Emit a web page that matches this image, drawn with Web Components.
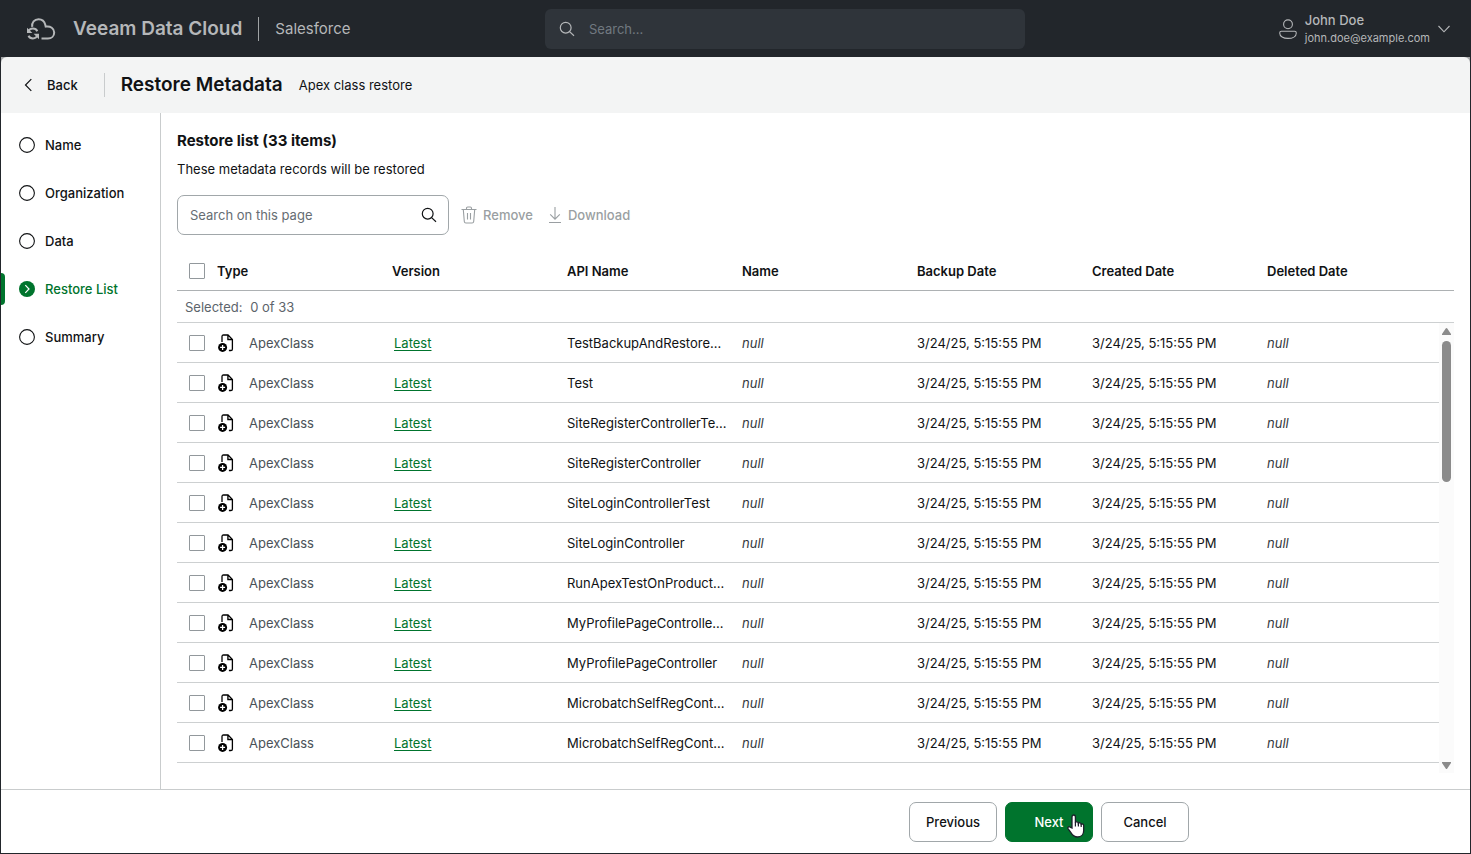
<!DOCTYPE html>
<html lang="en">
<head>
<meta charset="utf-8">
<title>Restore Metadata</title>
<style>
  html,
  body {
    height: 100%;
    margin: 0;
  }
  body {
    font-family: Inter, "Liberation Sans", sans-serif;
    font-size: 13px;
    line-height: 20px;
    color: #101214;
  }
</style>
</head>
<body>
<restore-app></restore-app>

<script>
const ICONS = {
  cloud: {
    box: '0 0 30 24',
    body: `<g fill="none" stroke="currentColor" stroke-width="2">
      <path d="M6.2 9.8C5.6 5.4 8.4 2.2 12.6 2.2c3.5 0 5.8 2.1 6.6 5.4l.5 2c4.8-.9 8.5 1.9 8.5 5.8 0 3.6-2.7 6.2-6.3 6.2h-6.4"/>
      <path d="M2.4 14.6c.7-2 2.4-3 4.5-3 2 0 3.6.9 4.4 2.6M11.6 17.8c-.7 2.3-2.5 3.6-4.7 3.6-2 0-3.6-.9-4.4-2.6"/>
    </g><path d="M1 10.8v5.2h5.4zM13 22.2v-5.4H7.6z" fill="currentColor"/>`,
  },
  search: {
    box: '0 0 16 16',
    body: '<g fill="none" stroke="currentColor" stroke-width="1.2"><circle cx="6.7" cy="6.7" r="5.4"/><path d="M10.6 10.6l4.4 4.2"/></g>',
  },
  user: {
    box: '0 0 18 20',
    body: '<g fill="none" stroke="currentColor" stroke-width="1.1"><circle cx="9" cy="5.3" r="4.4"/><path d="M2.4 12.3h13.2c1 0 1.7.6 1.7 1.6 0 3.5-3.7 5.5-8.3 5.5s-8.3-2-8.3-5.5c0-1 .7-1.6 1.7-1.6z"/></g>',
  },
  down: {
    box: '0 0 12 8',
    body: '<path d="M.5 1L6 6.8 11.5 1" fill="none" stroke="currentColor" stroke-width="1.1"/>',
  },
  back: {
    box: '0 0 8 14',
    body: '<path d="M7.3 1.2L1.5 7l5.8 5.8" fill="none" stroke="currentColor" stroke-width="1.2"/>',
  },
  trash: {
    box: '0 0 16 18',
    body: '<path d="M.5 3.5h15M5.5 3.5V2.2c0-.7.5-1.2 1.2-1.2h2.6c.7 0 1.2.5 1.2 1.2v1.3M2.3 3.5l1 12c.1.9.7 1.5 1.6 1.5h6.2c.9 0 1.5-.6 1.6-1.5l1-12M6.5 7v6.5M9.5 7v6.5" fill="none" stroke="currentColor" stroke-width="1.1"/>',
  },
  download: {
    box: '0 0 14 18',
    body: '<path d="M7 1v12M2.2 8.4L7 13.2l4.8-4.8M1 16.5h12" fill="none" stroke="currentColor" stroke-width="1.1"/>',
  },
  file: {
    box: '0 0 16 18',
    body: `<path d="M4 8V2.6C4 1.6 4.6 1 5.5 1H10l4.4 4.4v9.5c0 1-.6 1.6-1.5 1.6h-2M9.9 1.2v4.3h4.4" fill="none" stroke="#000" stroke-width="1.3"/>
      <circle cx="4.6" cy="13.4" r="4.5" fill="#000"/>
      <path d="M4.6 10.9v5M2.1 13.4h5" stroke="#fff" stroke-width="1.3"/>`,
  },
  circle: {
    box: '0 0 16 16',
    body: '<circle cx="8" cy="8" r="7.4" fill="none" stroke="currentColor" stroke-width="1.1"/>',
  },
  current: {
    box: '0 0 16 16',
    body: '<circle cx="8" cy="8" r="8" fill="currentColor"/><path d="M6.3 4.2L10 8l-3.7 3.8" fill="none" stroke="#fff" stroke-width="1.2"/>',
  },
  pointer: {
    box: '0 0 18 24',
    body: '<path d="M5 14V3c0-1.2.8-2 1.7-2s1.7.8 1.7 2v5.4c.3-.9 2.9-.8 3 .8.5-.8 2.7-.5 2.8 1 .8-.6 2.5 0 2.5 1.4v4.8c0 3.8-2.4 6.6-6.2 6.6-3.2 0-4.8-1.4-6.4-4.1L1 14.6c-.6-1.2.9-2.5 2.2-1.5z" fill="#fff" stroke="#1b1f2a" stroke-width="1.3"/><path d="M8.4 8v4.5M11.4 9v3.5M14.2 10v3" stroke="#1b1f2a" stroke-width="1.2"/>',
  },
};

class AppIcon extends HTMLElement {
  constructor() {
    super();
    this.attachShadow({ mode: 'open' });
  }

  connectedCallback() {
    const icon = ICONS[this.getAttribute('name')];
    const [, , width, height] = icon.box.split(' ');
    this.shadowRoot.innerHTML = `
      <style>
        :host {
          display: inline-flex;
          flex: none;
        }
        svg {
          display: block;
        }
      </style>
      <svg width="${width}" height="${height}" viewBox="${icon.box}" aria-hidden="true">${icon.body}</svg>
    `;
  }
}

class AppHeader extends HTMLElement {
  constructor() {
    super();
    this.attachShadow({ mode: 'open' });
    this.shadowRoot.innerHTML = `
      <style>
        :host {
          display: flex;
          align-items: center;
          box-sizing: border-box;
          height: 57px;
          padding: 1px 0 0 1px;
          background: #22262b;
          color: #b5b7b9;
        }
        .brand {
          display: flex;
          align-items: center;
          box-sizing: border-box;
          width: 37%;
          padding-left: 25px;
          white-space: nowrap;
        }
        .product {
          margin-left: 17px;
          padding-right: 16px;
          border-right: 1px solid #a0a3a5;
          font-size: 19px;
          font-weight: 600;
          line-height: 24px;
        }
        .service {
          margin-left: 16px;
          font-size: 15px;
        }
        .search {
          display: flex;
          align-items: center;
          gap: 14px;
          box-sizing: border-box;
          flex: 0 1 480px;
          height: 40px;
          padding: 0 14px;
          border-radius: 6px;
          background: #2f343a;
        }
        input {
          flex: 1;
          min-width: 0;
          padding: 0;
          border: 0;
          outline: 0;
          background: none;
          color: inherit;
          font: inherit;
        }
        input::placeholder {
          color: #717980;
          opacity: 1;
        }
        .account {
          display: flex;
          align-items: center;
          gap: 8px;
          margin-left: auto;
          padding: 0 21px 0 0;
          border: 0;
          background: none;
          color: inherit;
          font: inherit;
          text-align: left;
        }
        .who {
          display: flex;
          flex-direction: column;
          line-height: 18px;
        }
        .name {
          font-weight: 500;
        }
        .mail {
          font-size: 11px;
        }
      </style>
      <div class="brand">
        <app-icon name="cloud"></app-icon>
        <span class="product">Veeam Data Cloud</span>
        <span class="service">Salesforce</span>
      </div>
      <label class="search">
        <app-icon name="search"></app-icon>
        <input type="text" placeholder="Search..." aria-label="Search">
      </label>
      <button class="account" type="button">
        <app-icon name="user"></app-icon>
        <span class="who">
          <span class="name">John Doe</span>
          <span class="mail">john.doe@example.com</span>
        </span>
        <app-icon name="down"></app-icon>
      </button>
    `;
  }
}

class PageBar extends HTMLElement {
  constructor() {
    super();
    this.attachShadow({ mode: 'open' });
    this.shadowRoot.innerHTML = `
      <style>
        :host {
          display: flex;
          align-items: center;
          height: 56px;
          border-radius: 6px 6px 0 0;
          background: #f3f4f4;
        }
        a {
          display: flex;
          align-items: center;
          gap: 15px;
          padding: 0 26px 0 23px;
          border-right: 1px solid #c9cccd;
          color: inherit;
          font-weight: 500;
          line-height: 24px;
          text-decoration: none;
        }
        h1 {
          margin: 0 16px;
          font-size: 19px;
          font-weight: 600;
          line-height: 24px;
        }
      </style>
      <a href="#back"><app-icon name="back"></app-icon>Back</a>
      <h1><slot></slot></h1>
      <slot name="note"></slot>
    `;
  }
}

class StepItem extends HTMLElement {
  constructor() {
    super();
    this.attachShadow({ mode: 'open' });
  }

  connectedCallback() {
    const current = this.hasAttribute('current');
    this.shadowRoot.innerHTML = `
      <style>
        :host {
          display: block;
          padding: 8px 0;
        }
        a {
          display: flex;
          align-items: center;
          gap: 10px;
          height: 32px;
          padding-left: 18px;
          color: inherit;
          font-weight: 500;
          text-decoration: none;
        }
        :host([current]) a {
          gap: 10px;
          padding-left: 0;
          color: #00742d;
        }
        :host([current]) a::before {
          content: '';
          width: 4px;
          height: 32px;
          margin-right: 4px;
          border-radius: 0 4px 4px 0;
          background: currentColor;
        }
      </style>
      <a href="#step" ${current ? 'aria-current="step"' : ''}>
        <app-icon name="${current ? 'current' : 'circle'}"></app-icon>
        <slot></slot>
      </a>
    `;
  }
}

class WizardSteps extends HTMLElement {
  constructor() {
    super();
    this.attachShadow({ mode: 'open' });
    this.shadowRoot.innerHTML = `
      <style>
        :host {
          display: block;
          flex: 0 0 159px;
          padding-top: 8px;
          border-right: 1px solid #c9cccd;
        }
      </style>
      <nav aria-label="Wizard steps"><slot></slot></nav>
    `;
  }
}

class AppButton extends HTMLElement {
  constructor() {
    super();
    this.attachShadow({ mode: 'open' });
    this.shadowRoot.innerHTML = `
      <style>
        :host {
          display: block;
          position: relative;
        }
        button {
          display: block;
          min-width: 88px;
          height: 40px;
          padding: 0 12px;
          border: 1px solid #a1a7aa;
          border-radius: 7px;
          background: #fff;
          color: inherit;
          font: inherit;
          font-weight: 500;
        }
        :host([primary]) button {
          border-color: #00742d;
          background: #00742d;
          color: #fff;
        }
        ::slotted(app-icon) {
          position: absolute;
          right: 8px;
          bottom: 4px;
        }
      </style>
      <button type="button"><slot></slot></button>
      <slot name="pointer"></slot>
    `;
  }
}

class ActionButton extends HTMLElement {
  constructor() {
    super();
    this.attachShadow({ mode: 'open' });
  }

  connectedCallback() {
    this.shadowRoot.innerHTML = `
      <style>
        button {
          display: flex;
          align-items: center;
          gap: 6px;
          padding: 0;
          border: 0;
          background: none;
          color: #9a9fa2;
          font: inherit;
          font-weight: 500;
        }
      </style>
      <button type="button" disabled>
        <app-icon name="${this.getAttribute('icon')}"></app-icon>
        <slot></slot>
      </button>
    `;
  }
}

class ListToolbar extends HTMLElement {
  constructor() {
    super();
    this.attachShadow({ mode: 'open' });
    this.shadowRoot.innerHTML = `
      <style>
        :host {
          display: flex;
          align-items: center;
          gap: 15px;
        }
        .search {
          display: flex;
          align-items: center;
          box-sizing: border-box;
          width: 272px;
          height: 40px;
          margin-right: -3px;
          padding: 0 11px 0 12px;
          border: 1px solid #a1a7aa;
          border-radius: 7px;
        }
        input {
          flex: 1;
          min-width: 0;
          padding: 0;
          border: 0;
          outline: 0;
          font: inherit;
        }
        input::placeholder {
          color: #666d73;
          opacity: 1;
        }
      </style>
      <label class="search">
        <input type="text" placeholder="Search on this page" aria-label="Search on this page">
        <app-icon name="search"></app-icon>
      </label>
      <action-button icon="trash">Remove</action-button>
      <action-button icon="download">Download</action-button>
    `;
  }
}

class MetadataTable extends HTMLElement {
  constructor() {
    super();
    this.attachShadow({ mode: 'open' });
    this.columns = ['Type', 'Version', 'API Name', 'Name', 'Backup Date', 'Created Date', 'Deleted Date'];
    this.names = [
      'TestBackupAndRestore...',
      'Test',
      'SiteRegisterControllerTe...',
      'SiteRegisterController',
      'SiteLoginControllerTest',
      'SiteLoginController',
      'RunApexTestOnProduct...',
      'MyProfilePageControlle...',
      'MyProfilePageController',
      'MicrobatchSelfRegCont...',
      'MicrobatchSelfRegCont...',
    ];
  }

  connectedCallback() {
    this.shadowRoot.innerHTML = `
      <style>
        :host {
          display: flex;
          flex-direction: column;
        }
        table {
          width: 100%;
          table-layout: fixed;
          border-collapse: separate;
          border-spacing: 0;
        }
        col {
          width: 175px;
        }
        .check {
          width: 40px;
        }
        .last {
          width: auto;
        }
        th,
        td {
          box-sizing: border-box;
          height: 40px;
          padding: 0;
          border-bottom: 1px solid #cdd0d1;
          text-align: left;
          white-space: nowrap;
        }
        th {
          border-color: #adb1b3;
          font-weight: 600;
        }
        input {
          display: block;
          appearance: none;
          box-sizing: border-box;
          width: 16px;
          height: 16px;
          margin: 0 0 0 12px;
          border: 1px solid #92989c;
          border-radius: 1px;
          background: #fff;
        }
        .selected {
          height: 31px;
          padding-left: 8px;
          border-bottom: 1px solid #cdd0d1;
          color: #5c646b;
          line-height: 32px;
        }
        .selected span {
          margin-left: 4px;
        }
        .type {
          display: flex;
          align-items: center;
          gap: 15px;
          padding-left: 1px;
          color: #4b5157;
        }
        .version {
          padding-left: 2px;
        }
        a {
          color: #00742d;
          text-underline-offset: 2px;
        }
        em {
          color: #33383c;
        }
        .body {
          display: flex;
          align-items: flex-start;
        }
        .bar {
          display: flex;
          flex: 0 0 15px;
          flex-direction: column;
          align-items: center;
          box-sizing: border-box;
          height: 450px;
          padding: 5px 0 4px;
          background: #fbfbfb;
        }
        .bar svg {
          flex: none;
          fill: #8b8b8b;
        }
        .thumb {
          width: 9px;
          height: 141px;
          margin: 6px 0 auto;
          border-radius: 5px;
          background: #8b8b8b;
        }
      </style>
      <table>
        ${this.renderCols()}
        <thead>
          <tr>
            <th><input type="checkbox" aria-label="Select all"></th>
            ${this.columns.map((name) => `<th>${name}</th>`).join('')}
          </tr>
        </thead>
      </table>
      <div class="selected">Selected: <span>0 of 33</span></div>
      <div class="body">
        <table aria-label="Restore list">
          ${this.renderCols()}
          <tbody>${this.names.map((name) => this.renderRow(name)).join('')}</tbody>
        </table>
        <div class="bar">
          <svg width="9" height="7" viewBox="0 0 9 7"><path d="M3.7.6c.4-.7 1.2-.7 1.6 0L9 6v1H0V6z"/></svg>
          <div class="thumb"></div>
          <svg width="9" height="7" viewBox="0 0 9 7"><path d="M3.7 6.4c.4.7 1.2.7 1.6 0L9 1V0H0v1z"/></svg>
        </div>
      </div>
    `;
  }

  renderCols() {
    return `
      <colgroup>
        <col class="check"><col><col><col><col><col><col><col class="last">
      </colgroup>
    `;
  }

  renderRow(name) {
    const date = '3/24/25, 5:15:55 PM';
    return `
      <tr>
        <td><input type="checkbox" aria-label="Select row"></td>
        <td><div class="type"><app-icon name="file"></app-icon>ApexClass</div></td>
        <td class="version"><a href="#version">Latest</a></td>
        <td>${name}</td>
        <td><em>null</em></td>
        <td>${date}</td>
        <td>${date}</td>
        <td><em>null</em></td>
      </tr>
    `;
  }
}

class WizardFooter extends HTMLElement {
  constructor() {
    super();
    this.attachShadow({ mode: 'open' });
    this.shadowRoot.innerHTML = `
      <style>
        :host {
          display: block;
          padding: 12px 0 11px;
          border-top: 1px solid #c9cccd;
        }
        .actions {
          display: flex;
          justify-content: flex-end;
          gap: 8px;
          max-width: 1188px;
        }
      </style>
      <div class="actions"><slot></slot></div>
    `;
  }
}

class RestoreApp extends HTMLElement {
  constructor() {
    super();
    this.attachShadow({ mode: 'open' });
    this.shadowRoot.innerHTML = `
      <style>
        :host {
          display: flex;
          flex-direction: column;
          box-sizing: border-box;
          min-height: 100%;
          background: #fff;
        }
        .page {
          display: flex;
          flex: 1;
          flex-direction: column;
          border: 1px solid #22262b;
          border-top: 0;
        }
        .top {
          background: #a3a5a7;
        }
        .middle {
          display: flex;
          flex: 1;
        }
        main {
          flex: 1;
          min-width: 0;
          padding: 16px;
        }
        h2 {
          margin: 0;
          font-size: 15px;
          font-weight: 700;
          line-height: 24px;
        }
        p {
          margin: 6px 0 16px;
        }
        metadata-table {
          margin-top: 16px;
        }
      </style>
      <app-header></app-header>
      <div class="page">
        <div class="top">
          <page-bar>Restore Metadata<span slot="note">Apex class restore</span></page-bar>
        </div>
        <div class="middle">
          <wizard-steps>
            <step-item>Name</step-item>
            <step-item>Organization</step-item>
            <step-item>Data</step-item>
            <step-item current>Restore List</step-item>
            <step-item>Summary</step-item>
          </wizard-steps>
          <main>
            <h2>Restore list (33 items)</h2>
            <p>These metadata records will be restored</p>
            <list-toolbar></list-toolbar>
            <metadata-table></metadata-table>
          </main>
        </div>
        <wizard-footer>
          <app-button>Previous</app-button>
          <app-button primary>Next<app-icon slot="pointer" name="pointer"></app-icon></app-button>
          <app-button>Cancel</app-button>
        </wizard-footer>
      </div>
    `;
  }
}

customElements.define('app-icon', AppIcon);
customElements.define('app-header', AppHeader);
customElements.define('page-bar', PageBar);
customElements.define('step-item', StepItem);
customElements.define('wizard-steps', WizardSteps);
customElements.define('app-button', AppButton);
customElements.define('action-button', ActionButton);
customElements.define('list-toolbar', ListToolbar);
customElements.define('metadata-table', MetadataTable);
customElements.define('wizard-footer', WizardFooter);
customElements.define('restore-app', RestoreApp);
</script>
</body>
</html>
